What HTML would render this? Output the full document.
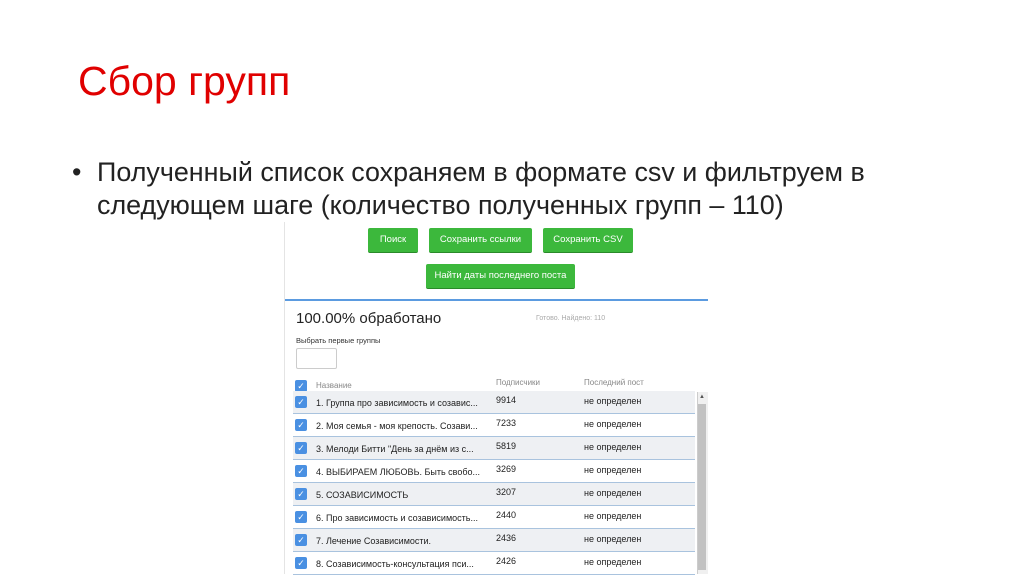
<!DOCTYPE html>
<html><head><meta charset="utf-8"><style>
body{margin:0;width:1024px;height:574px;background:#fff;position:relative;overflow:hidden;font-family:"Liberation Sans",sans-serif}
.t{position:absolute;left:78px;top:58px;font-size:41px;color:#e00000;font-family:"Liberation Sans",sans-serif}
.b{position:absolute;left:72px;top:156px;font-size:26.9px;line-height:33px;color:#222}
.abs{position:absolute}
.btn{position:absolute;background:#3cb83c;color:#fff;font-size:9.5px;text-align:center;line-height:24px;height:24px;border-radius:2px;border-bottom:1px solid #2a8a2a}
.row{position:absolute;left:293px;width:402px;height:22px;font-size:9px;color:#222;border-bottom:1px solid #a9c3de}
.row.g{background:#eef0f3}
.cb{position:absolute;left:2px;top:5px;width:12px;height:12px;background:#4a90e2;border-radius:2px;color:#fff;font-size:9px;line-height:12px;text-align:center}
</style></head><body>
<div class="t">Сбор групп</div>
<div class="b"><span style="position:absolute;left:0">•</span><div style="margin-left:25px;white-space:nowrap">Полученный список сохраняем в формате csv и фильтруем в<br>следующем шаге (количество полученных групп – 110)</div></div>
<div class="abs" style="left:284px;top:222px;width:1px;height:352px;background:#e4e4e4"></div>
<div class="btn" style="left:368px;top:228px;width:50px">Поиск</div>
<div class="btn" style="left:429px;top:228px;width:103px">Сохранить ссылки</div>
<div class="btn" style="left:543px;top:228px;width:90px">Сохранить CSV</div>
<div class="btn" style="left:426px;top:264px;width:149px">Найти даты последнего поста</div>
<div class="abs" style="left:285px;top:299px;width:423px;height:2px;background:#5b9be0"></div>
<div class="abs" style="left:296px;top:310px;font-size:15px;color:#222">100.00% обработано</div>
<div class="abs" style="left:536px;top:315px;font-size:7px;color:#aaa">Готово. Найдено: 110</div>
<div class="abs" style="left:296px;top:336px;font-size:7.5px;color:#333">Выбрать первые группы</div>
<div class="abs" style="left:296px;top:348px;width:39px;height:19px;border:1px solid #ccc;border-radius:2px"></div>
<div class="abs" style="left:295px;top:380px;width:12px;height:12px;background:#4a90e2;border-radius:2px;color:#fff;font-size:9px;line-height:12px;text-align:center">✓</div>
<div class="abs" style="left:316px;top:381px;font-size:8px;color:#888">Название</div>
<div class="abs" style="left:496px;top:378px;font-size:8px;color:#888">Подписчики</div>
<div class="abs" style="left:584px;top:378px;font-size:8px;color:#888">Последний пост</div>
<div class="row g" style="top:391px"><div class="cb">✓</div><span class="abs" style="left:23px;top:7px">1. Группа про зависимость и созавис...</span><span class="abs" style="left:203px;top:4px">9914</span><span class="abs" style="left:291px;top:5px">не определен</span></div>
<div class="row" style="top:414px"><div class="cb">✓</div><span class="abs" style="left:23px;top:7px">2. Моя семья - моя крепость. Созави...</span><span class="abs" style="left:203px;top:4px">7233</span><span class="abs" style="left:291px;top:5px">не определен</span></div>
<div class="row g" style="top:437px"><div class="cb">✓</div><span class="abs" style="left:23px;top:7px">3. Мелоди Битти "День за днём из с...</span><span class="abs" style="left:203px;top:4px">5819</span><span class="abs" style="left:291px;top:5px">не определен</span></div>
<div class="row" style="top:460px"><div class="cb">✓</div><span class="abs" style="left:23px;top:7px">4. ВЫБИРАЕМ ЛЮБОВЬ. Быть свобо...</span><span class="abs" style="left:203px;top:4px">3269</span><span class="abs" style="left:291px;top:5px">не определен</span></div>
<div class="row g" style="top:483px"><div class="cb">✓</div><span class="abs" style="left:23px;top:7px">5. СОЗАВИСИМОСТЬ</span><span class="abs" style="left:203px;top:4px">3207</span><span class="abs" style="left:291px;top:5px">не определен</span></div>
<div class="row" style="top:506px"><div class="cb">✓</div><span class="abs" style="left:23px;top:7px">6. Про зависимость и созависимость...</span><span class="abs" style="left:203px;top:4px">2440</span><span class="abs" style="left:291px;top:5px">не определен</span></div>
<div class="row g" style="top:529px"><div class="cb">✓</div><span class="abs" style="left:23px;top:7px">7. Лечение Созависимости.</span><span class="abs" style="left:203px;top:4px">2436</span><span class="abs" style="left:291px;top:5px">не определен</span></div>
<div class="row" style="top:552px"><div class="cb">✓</div><span class="abs" style="left:23px;top:7px">8. Созависимость-консультация  пси...</span><span class="abs" style="left:203px;top:4px">2426</span><span class="abs" style="left:291px;top:5px">не определен</span></div>
<div class="abs" style="left:697px;top:392px;width:10px;height:182px;background:#f0f0f0;border-left:1px solid #ccc"></div>
<div class="abs" style="left:698px;top:404px;width:8px;height:166px;background:#c2c2c2"></div>
<div class="abs" style="left:699px;top:394px;font-size:6px;color:#555">▲</div>
</body></html>
